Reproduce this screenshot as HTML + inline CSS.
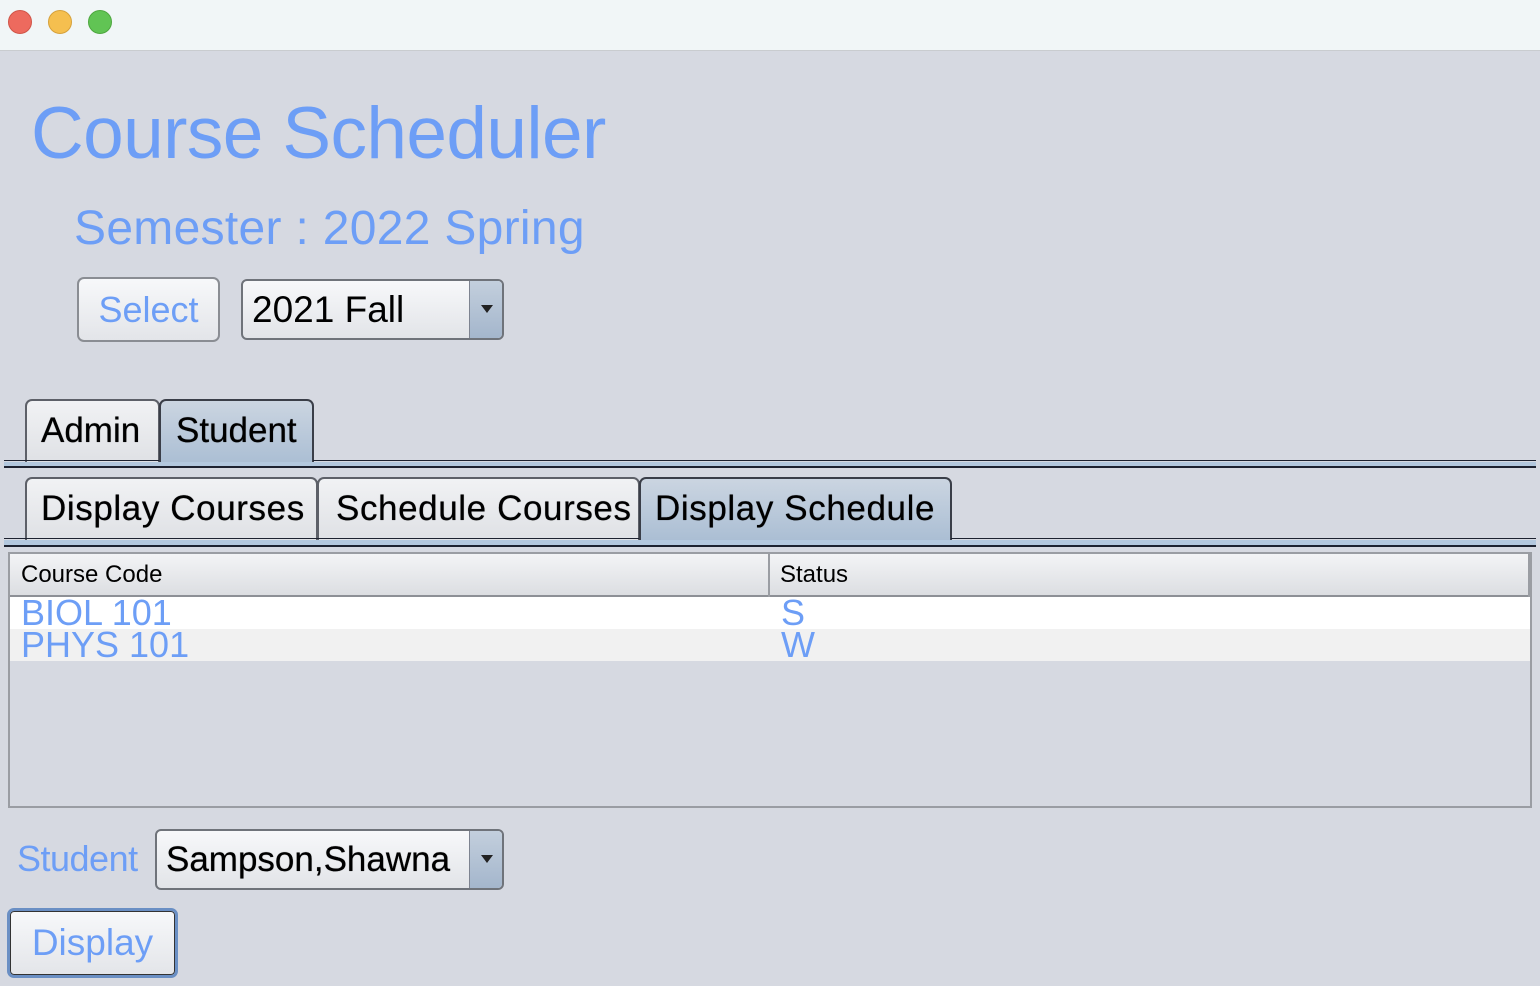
<!DOCTYPE html>
<html><head><meta charset="utf-8"><style>
*{box-sizing:border-box;margin:0;padding:0}
body{width:1540px;height:986px;background:#d6d9e1;font-family:"Liberation Sans",sans-serif;position:relative;overflow:hidden}
.abs{position:absolute;white-space:nowrap}
.tb{left:0;top:0;width:1540px;height:51px;background:#f1f6f7;border-bottom:1px solid #c9cccf}
.dot{width:24px;height:24px;border-radius:50%;top:10px}
.blue{color:#6d9ef6}
.btn{border:2px solid #8a8d93;border-radius:7px;background:linear-gradient(#f7f8fa,#e3e5e9);}
.combo{border:2px solid #6f737a;border-radius:6px;background:linear-gradient(#f7f8fa,#e2e4e8);}
.arr{position:absolute;right:0;top:0;bottom:0;width:33px;border-left:1px solid #7d8390;background:linear-gradient(#c3cfdd,#a4b6cc);border-radius:0 4px 4px 0}
.arr:after{content:"";position:absolute;left:11px;top:24px;border-left:6px solid transparent;border-right:6px solid transparent;border-top:8px solid #222}
.tab{border:2px solid #5d6068;border-bottom:none;border-radius:7px 7px 0 0;background:linear-gradient(#f1f2f4,#dfe1e5);font-size:35px;color:#000;padding-left:14px;line-height:60px;overflow:hidden;text-shadow:0 0 0.6px #000}
.sel{background:linear-gradient(#cbd5e1,#a9bdd3);border-color:#3a3e48}
.line{left:4px;width:1532px;height:2px;background:#1d2230}
.band{left:4px;width:1532px;height:5px;background:#b3c8de}
</style></head><body>
<div class="abs tb"></div>
<div class="abs dot" style="left:8px;background:#ed6a5e;border:1px solid #d05548"></div>
<div class="abs dot" style="left:48px;background:#f5bf4f;border:1px solid #d6a13b"></div>
<div class="abs dot" style="left:88px;background:#61c454;border:1px solid #4ea73f"></div>

<div class="abs blue" style="left:31px;top:92px;font-size:73px;letter-spacing:-0.6px">Course Scheduler</div>
<div class="abs blue" style="left:74px;top:201px;font-size:48px;letter-spacing:0.3px">Semester : 2022 Spring</div>

<div class="abs btn blue" style="left:77px;top:277px;width:143px;height:65px;font-size:36px;text-align:center;line-height:62px">Select</div>
<div class="abs combo" style="left:241px;top:279px;width:263px;height:61px;font-size:37px;line-height:57px;padding-left:9px">2021 Fall<div class="arr"></div></div>

<div class="abs tab" style="left:25px;top:399px;width:135px;height:63px">Admin</div>
<div class="abs tab sel" style="left:159px;top:399px;width:155px;height:68px;padding-left:15px">Student</div>
<div class="abs line" style="top:460px;left:4px;width:155px;height:1px"></div>
<div class="abs line" style="top:460px;left:313px;width:1223px;height:1px"></div>
<div class="abs band" style="top:462px"></div>
<div class="abs line" style="top:466px"></div>

<div class="abs tab" style="left:25px;top:477px;width:293px;height:63px;letter-spacing:0.6px">Display Courses</div>
<div class="abs tab" style="left:317px;top:477px;width:323px;height:63px;padding-left:17px;letter-spacing:0.6px">Schedule Courses</div>
<div class="abs tab sel" style="left:639px;top:477px;width:313px;height:67px;letter-spacing:0.6px">Display Schedule</div>
<div class="abs line" style="top:538px;left:4px;width:635px;height:1px"></div>
<div class="abs line" style="top:538px;left:951px;width:585px;height:1px"></div>
<div class="abs band" style="top:540px"></div>
<div class="abs line" style="top:545px"></div>

<div class="abs" style="left:8px;top:552px;width:1524px;height:256px;border:2px solid #9a9da3;background:#d6d9e1">
 <div class="abs" style="left:0;top:0;width:1520px;height:43px;background:linear-gradient(#f3f4f6,#dcdee2);border-bottom:2px solid #8d9096"></div>
 <div class="abs" style="left:758px;top:0;width:2px;height:43px;background:#9a9da3"></div>
 <div class="abs" style="left:1518px;top:0;width:2px;height:43px;background:#9a9da3"></div>
 <div class="abs" style="left:11px;top:7px;font-size:24px">Course Code</div>
 <div class="abs" style="left:770px;top:7px;font-size:24px">Status</div>
 <div class="abs" style="left:0;top:43px;width:1520px;height:32px;background:#fff"></div>
 <div class="abs" style="left:0;top:75px;width:1520px;height:32px;background:#f1f1f1"></div>
 <div class="abs blue" style="left:11px;top:41px;font-size:36px;line-height:36px">BIOL 101</div>
 <div class="abs blue" style="left:11px;top:73px;font-size:36px;line-height:36px">PHYS 101</div>
 <div class="abs blue" style="left:771px;top:41px;font-size:36px;line-height:36px">S</div>
 <div class="abs blue" style="left:771px;top:73px;font-size:36px;line-height:36px">W</div>
</div>

<div class="abs blue" style="left:17px;top:838px;font-size:36px;letter-spacing:-0.5px">Student</div>
<div class="abs combo" style="left:155px;top:829px;width:349px;height:61px;font-size:35px;line-height:57px;padding-left:9px;text-shadow:0 0 0.6px #000">Sampson,Shawna<div class="arr"></div></div>

<div class="abs btn blue" style="left:7px;top:908px;width:171px;height:70px;border:3px solid #6a8fc4;font-size:37px;line-height:64px;text-align:center;box-shadow:inset 0 0 0 1px #333">Display</div>
</body></html>
